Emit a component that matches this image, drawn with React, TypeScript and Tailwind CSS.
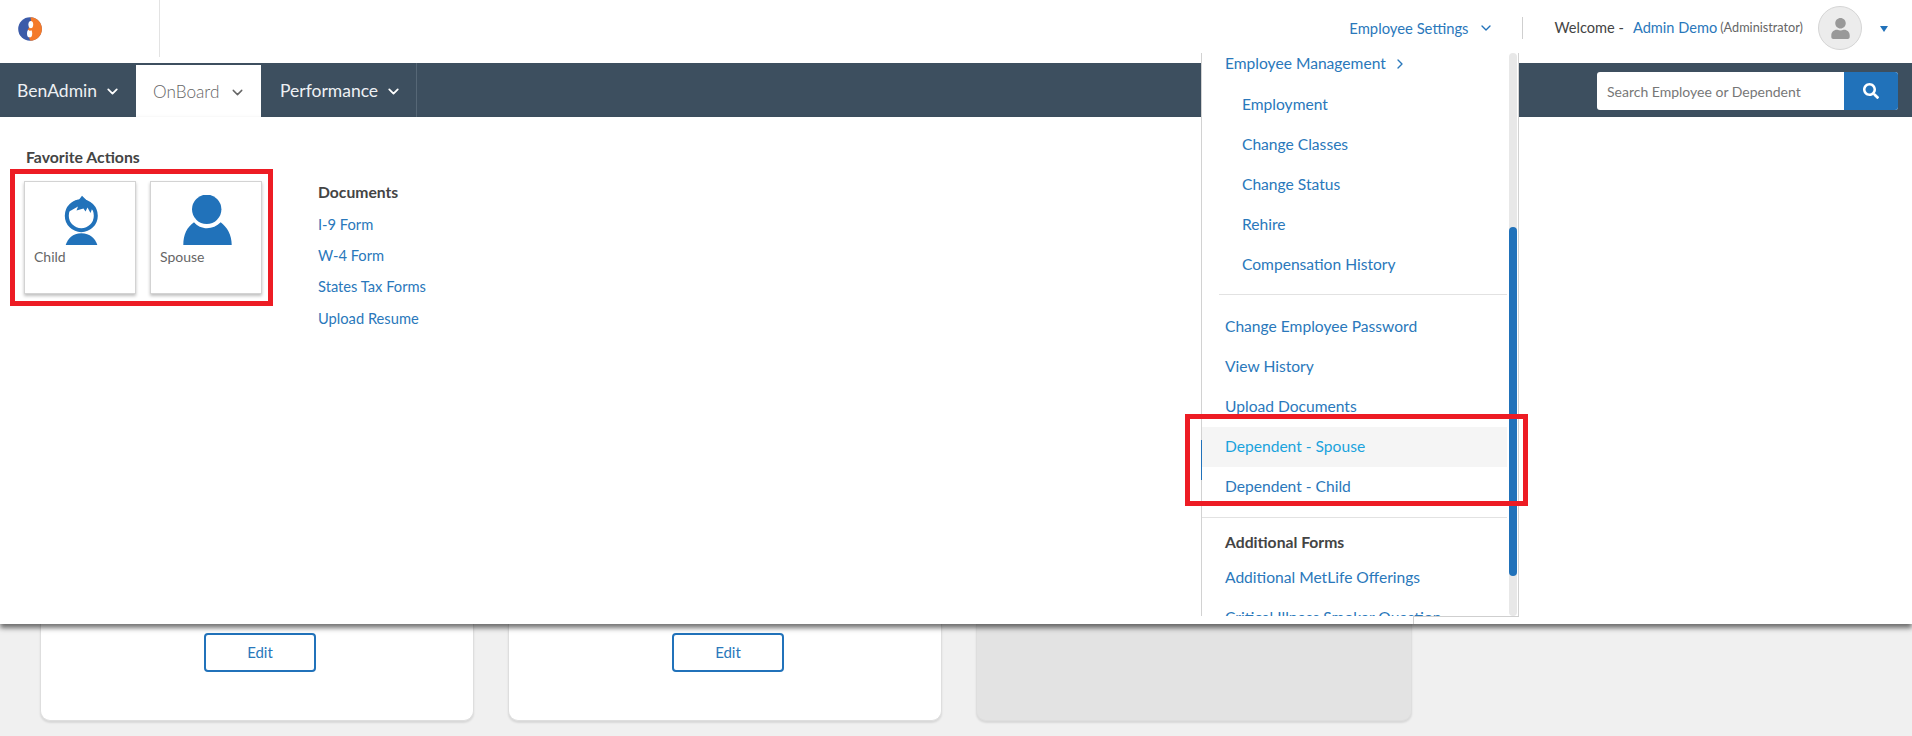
import { ChevronDown, ChevronRight } from 'lucide-react';
import { FaSearch, FaUser } from 'react-icons/fa';

const FONT = "font-['Lato','Liberation_Sans',sans-serif]";

function Logo() {
  return (
    <svg width="24" height="24" viewBox="0 0 24 24">
      <circle cx="12" cy="12" r="11.800" fill="#3b5ba9" />
      <path d="M12.500 0.200C19 .4 24 5.500 24 12s-5 11.600-11.500 11.800c-1-1.500-1.500-3-1.200-4.500 0-2.500-.8-5-.8-7.300 0-2.500 2.500-5 2.500-7.500 0-1.300-.2-2.700-.5-4.300z" fill="#f47a2a" />
      <ellipse cx="12.800" cy="7.600" rx="2.400" ry="3.700" fill="#fff" />
      <ellipse cx="11.600" cy="16.400" rx="2.600" ry="3.900" fill="#fff" />
      <path d="M9.500 12.200c1.200-.8 3-.8 5 0l-2.500 1.800z" fill="#f47a2a" />
    </svg>
  );
}

function ChildIcon() {
  return (
    <svg width="50" height="50" viewBox="0 0 50 50" fill="#2172ba">
      <circle cx="25.300" cy="20.700" r="14.500" fill="none" stroke="#2172ba" strokeWidth="4" />
      <path d="M12 17C12.500 11 16 6.500 20 5.500L22 6 26 .7 37 11.500C39 13 40 15 40 18L36 14 34.500 18 31.500 12.500 29.500 16.500 27.500 13.500 20.500 15.500 22 11.500 15 15.500z" />
      <path d="M9.700 50c2-6 7-11.700 15.600-11.700S39.500 44 41.300 50z" />
    </svg>
  );
}

function SpouseIcon() {
  return (
    <svg width="60" height="50" viewBox="0 0 60 50" fill="#2172ba">
      <circle cx="29.700" cy="14.300" r="14.700" />
      <path d="M6.300 50C6.300 40 10 32 17 27.300 20 31 25 33.300 30 33.300s10-2.300 13.700-6C50 32 54.700 40 54.700 50z" />
    </svg>
  );
}

function NavTab({ label, active, className }: { label: string; active?: boolean; className: string }) {
  return (
    <div
      className={`flex items-center pt-[2px] ${active ? 'mt-[2px] gap-[10px] bg-white text-[17.200px] font-light text-[#666]' : 'gap-[7px] text-[17.500px] text-[#eef1f4]'} ${className}`}
    >
      {label}
      <ChevronDown size={17} strokeWidth={active ? 2 : 2.500} className={active ? 'text-[#666]' : 'text-white'} />
    </div>
  );
}

function ActionCard({ label, icon }: { label: string; icon: React.ReactNode }) {
  return (
    <div className="flex h-[113px] w-[112px] flex-col border border-[#d3d3d3] bg-white pt-[13px] shadow-[0_2px_3px_rgba(0,0,0,0.25)]">
      <div className="flex justify-center pl-[1px]">{icon}</div>
      <div className="mt-[2px] pl-[9px] text-[14px] leading-[20px] text-[#666]">{label}</div>
    </div>
  );
}

function MenuLink({ label, indent, active, className }: { label: string; indent?: boolean; active?: boolean; className?: string }) {
  return (
    <div
      className={`flex h-[40px] items-center text-[15.600px] ${indent ? 'pl-[40px]' : 'pl-[23px]'} ${active ? 'bg-[#f5f5f5] text-[#1aa3dd]' : 'text-[#2a78bb]'} ${className ?? ''}`}
    >
      {label}
    </div>
  );
}

function BackCard({ grey }: { grey?: boolean }) {
  return (
    <div
      className={`flex h-[97px] justify-center rounded-b-[10px] border border-t-0 border-[#dedede] pl-[6px] pt-[9px] shadow-[0_2px_2px_rgba(0,0,0,0.1)] ${grey ? 'w-[436px] bg-[#e3e3e3]' : 'w-[434px] bg-white'}`}
    >
      {!grey && (
        <button className="flex h-[39px] w-[112px] items-center justify-center rounded-[4px] border-2 border-[#2172ba] text-[15px] text-[#2a78bb]">
          Edit
        </button>
      )}
    </div>
  );
}

export default function App() {
  return (
    <div className={`relative flex h-[736px] w-[1912px] flex-col overflow-hidden bg-[#f0f0f0] ${FONT}`}>
      {/* top header */}
      <header className="flex h-[63px] items-start bg-white">
        <div className="flex h-[57px] w-[160px] items-start border-r border-[#e3e3e3] pl-[18px] pt-[17px]">
          <Logo />
        </div>
        <div className="ml-auto flex h-[56px] items-center pr-[24px] text-[14.600px]">
          <span className="text-[14.800px] text-[#2a78bb]">Employee Settings</span>
          <ChevronDown size={16} className="ml-[9px] text-[#2172ba]" />
          <div className="ml-[28px] mr-[32px] h-[22px] w-px bg-[#cfcfcf]" />
          <span className="text-[#444]">Welcome -</span>
          <span className="ml-[9px] text-[#2a78bb]">Admin Demo</span>
          <span className="ml-[3px] text-[12.700px] text-[#666]">(Administrator)</span>
          <div className="ml-[15px] flex h-[44px] w-[44px] items-center justify-center rounded-full border border-[#d5d5d5] bg-[#ececec]">
            <FaUser size={21} className="text-[#999]" />
          </div>
          <div className="ml-[18px] mt-[2px] h-0 w-0 border-x-[4px] border-t-[6px] border-x-transparent border-t-[#2172ba]" />
        </div>
      </header>

      {/* nav bar */}
      <nav className="flex h-[54px] bg-[#3d4f5f]">
        <NavTab label="BenAdmin" className="w-[136px] pl-[17px]" />
        <NavTab label="OnBoard" active className="w-[125px] pl-[17px]" />
        <NavTab label="Performance" className="w-[156px] border-r border-[#566776] pl-[19px]" />
        <div className="ml-auto mr-[14px] mt-[9px] flex h-[38px] w-[301px] overflow-hidden rounded-[3px] bg-white">
          <div className="flex flex-1 items-center pl-[10px] text-[14px] text-[#777]">Search Employee or Dependent</div>
          <div className="flex w-[54px] items-center justify-center bg-[#2172ba]">
            <FaSearch size={16} className="text-white" />
          </div>
        </div>
      </nav>

      {/* mega menu panel */}
      <section className="relative z-10 flex h-[507px] gap-[56px] bg-white pl-[24px] pt-[30px] shadow-[0_4px_5px_rgba(0,0,0,0.55)]">
        <div>
          <div className="pl-[2px] text-[15.800px] font-bold leading-[20px] text-[#444]">Favorite Actions</div>
          <div className="mt-[14px] flex gap-[14px]">
            <ActionCard label="Child" icon={<ChildIcon />} />
            <ActionCard label="Spouse" icon={<SpouseIcon />} />
          </div>
        </div>
        <div className="pt-[35px]">
          <div className="mb-[6px] text-[15.700px] font-bold leading-[20px] text-[#444]">Documents</div>
          {['I-9 Form', 'W-4 Form', 'States Tax Forms', 'Upload Resume'].map((doc) => (
            <div key={doc} className="flex h-[31.300px] items-center text-[14.700px] text-[#2a78bb]">
              {doc}
            </div>
          ))}
        </div>
      </section>

      {/* cards behind the panel */}
      <main className="flex gap-[34px] pl-[40px]">
        <BackCard />
        <BackCard />
        <BackCard grey />
      </main>

      {/* employee settings dropdown */}
      <div className="absolute left-[1201px] top-[53px] z-20 h-[563px] w-[318px] overflow-hidden border-x border-[#d2d2d2] bg-white">
        <div className="-mt-[10px] w-[305px]">
          <div className="flex h-[41px] items-center gap-[6px] pl-[23px] text-[15.600px] text-[#2a78bb]">
            Employee Management
            <ChevronRight size={16} />
          </div>
          <div className="h-px" />
          <MenuLink label="Employment" indent />
          <MenuLink label="Change Classes" indent />
          <MenuLink label="Change Status" indent />
          <MenuLink label="Rehire" indent />
          <MenuLink label="Compensation History" indent />
          <div className="ml-[17px] mt-[9px] h-px bg-[#e2e2e2]" />
          <div className="h-[12px]" />
          <MenuLink label="Change Employee Password" />
          <MenuLink label="View History" />
          <MenuLink label="Upload Documents" />
          <MenuLink label="Dependent - Spouse" active />
          <MenuLink label="Dependent - Child" />
          <div className="mt-[10px] h-px bg-[#e2e2e2]" />
          <div className="flex h-[50px] items-center pl-[23px] text-[15.700px] font-bold text-[#444]">Additional Forms</div>
          <MenuLink label="Additional MetLife Offerings" className="-mt-[10px]" />
          <MenuLink label="Critical Illness Smoker Question" />
        </div>
        {/* scrollbar */}
        <div className="absolute right-[1px] top-0 h-full w-[8px] rounded-[4px] bg-[#e8e8e8]">
          <div className="absolute top-[174px] h-[349px] w-full rounded-[4px] bg-[#2172ba]" />
        </div>
      </div>
      <div className="absolute left-[1413px] top-[616px] z-20 h-px w-[106px] bg-[#cfcfcf]" />
      <div className="absolute left-[1413px] top-[616px] z-20 h-[8px] w-px bg-[#cfcfcf]" />
      <div className="absolute left-[1201px] top-[440px] z-20 h-[40px] w-px bg-[#2172ba]" />

      {/* red annotation boxes */}
      <div className="absolute left-[10px] top-[169px] z-30 h-[137px] w-[263px] border-[5px] border-[#ed1c24]" />
      <div className="absolute left-[1185px] top-[414px] z-30 h-[92px] w-[343px] border-[5px] border-[#ed1c24]" />
    </div>
  );
}
